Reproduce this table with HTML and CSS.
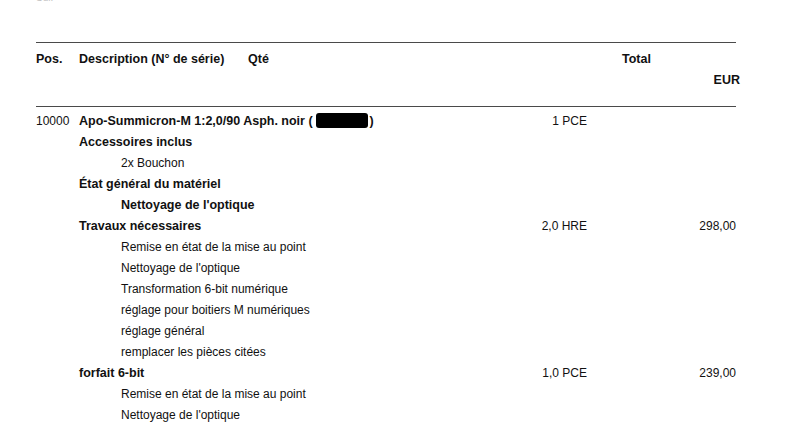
FILE: index.html
```html
<!DOCTYPE html>
<html lang="fr">
<head>
<meta charset="utf-8">
<link rel="stylesheet" href="styles.css">
</head>
<body>
<div class="page">
  <div class="clipped">Sdi.</div>
  <div class="rule"></div>
  <div class="head">
    <div class="h-pos">Pos.</div>
    <div class="h-desc">Description (N° de série)</div>
    <div class="h-qty">Qté</div>
    <div class="h-total">Total</div>
    <div class="h-cur">EUR</div>
  </div>
  <div class="rule"></div>
  <div class="items">
    <div class="pos">10000</div>
    <div class="desc b">Apo-Summicron-M 1:2,0/90 Asph. noir (<span class="redact"></span>)</div>
    <div class="qty">1 PCE</div>
    <div class="amt"></div>

    <div class="pos"></div><div class="desc b">Accessoires inclus</div><div class="qty"></div><div class="amt"></div>
    <div class="pos"></div><div class="desc sub">2x Bouchon</div><div class="qty"></div><div class="amt"></div>
    <div class="pos"></div><div class="desc b">État général du matériel</div><div class="qty"></div><div class="amt"></div>
    <div class="pos"></div><div class="desc sub b">Nettoyage de l'optique</div><div class="qty"></div><div class="amt"></div>
    <div class="pos"></div><div class="desc b">Travaux nécessaires</div><div class="qty">2,0 HRE</div><div class="amt">298,00</div>
    <div class="pos"></div><div class="desc sub">Remise en état de la mise au point</div><div class="qty"></div><div class="amt"></div>
    <div class="pos"></div><div class="desc sub">Nettoyage de l'optique</div><div class="qty"></div><div class="amt"></div>
    <div class="pos"></div><div class="desc sub">Transformation 6-bit numérique</div><div class="qty"></div><div class="amt"></div>
    <div class="pos"></div><div class="desc sub">réglage pour boitiers M numériques</div><div class="qty"></div><div class="amt"></div>
    <div class="pos"></div><div class="desc sub">réglage général</div><div class="qty"></div><div class="amt"></div>
    <div class="pos"></div><div class="desc sub">remplacer les pièces citées</div><div class="qty"></div><div class="amt"></div>
    <div class="pos"></div><div class="desc b">forfait 6-bit</div><div class="qty">1,0 PCE</div><div class="amt">239,00</div>
    <div class="pos"></div><div class="desc sub">Remise en état de la mise au point</div><div class="qty"></div><div class="amt"></div>
    <div class="pos"></div><div class="desc sub">Nettoyage de l'optique</div><div class="qty"></div><div class="amt"></div>
  </div>
</div>
</body>
</html>
```
FILE: styles.css
```css
html, body {
  margin: 0;
  padding: 0;
  background: #fff;
}
body {
  font-family: "Liberation Sans", Arial, sans-serif;
  font-size: 12px;
  color: #111;
  overflow: hidden;
}
.page {
  width: 700px;
  padding-left: 36px;
}
.clipped {
  margin-top: -9px;
  height: 14px;
  font-size: 10px;
  line-height: 14px;
  color: #c4c4c4;
}
.rule {
  height: 1px;
  background: #4a4a4a;
  margin-top: 37px;
}
.head {
  display: grid;
  grid-template-columns: 43px 169px 374px 1fr;
  grid-template-rows: 21px 21px;
  padding-top: 6px;
  padding-bottom: 15px;
  line-height: 21px;
  font-weight: bold;
  font-size: 12.5px;
}
.head + .rule {
  margin-top: 0;
}
.h-cur {
  grid-column: 4;
  grid-row: 2;
  text-align: right;
  margin-right: -4px;
  align-self: end;
}
.items {
  display: grid;
  grid-template-columns: 43px 1fr 120px 149px;
  grid-auto-rows: 21px;
  line-height: 21px;
  padding-top: 4px;
}
.pos {
  font-weight: normal;
}
.b {
  font-weight: bold;
  font-size: 12.5px;
}
.sub {
  padding-left: 42px;
}
.qty, .amt {
  text-align: right;
}
.redact {
  display: inline-block;
  width: 52px;
  height: 15px;
  background: #000;
  border-radius: 3px;
  vertical-align: -3px;
  margin: 0 2px 0 3px;
}
```
